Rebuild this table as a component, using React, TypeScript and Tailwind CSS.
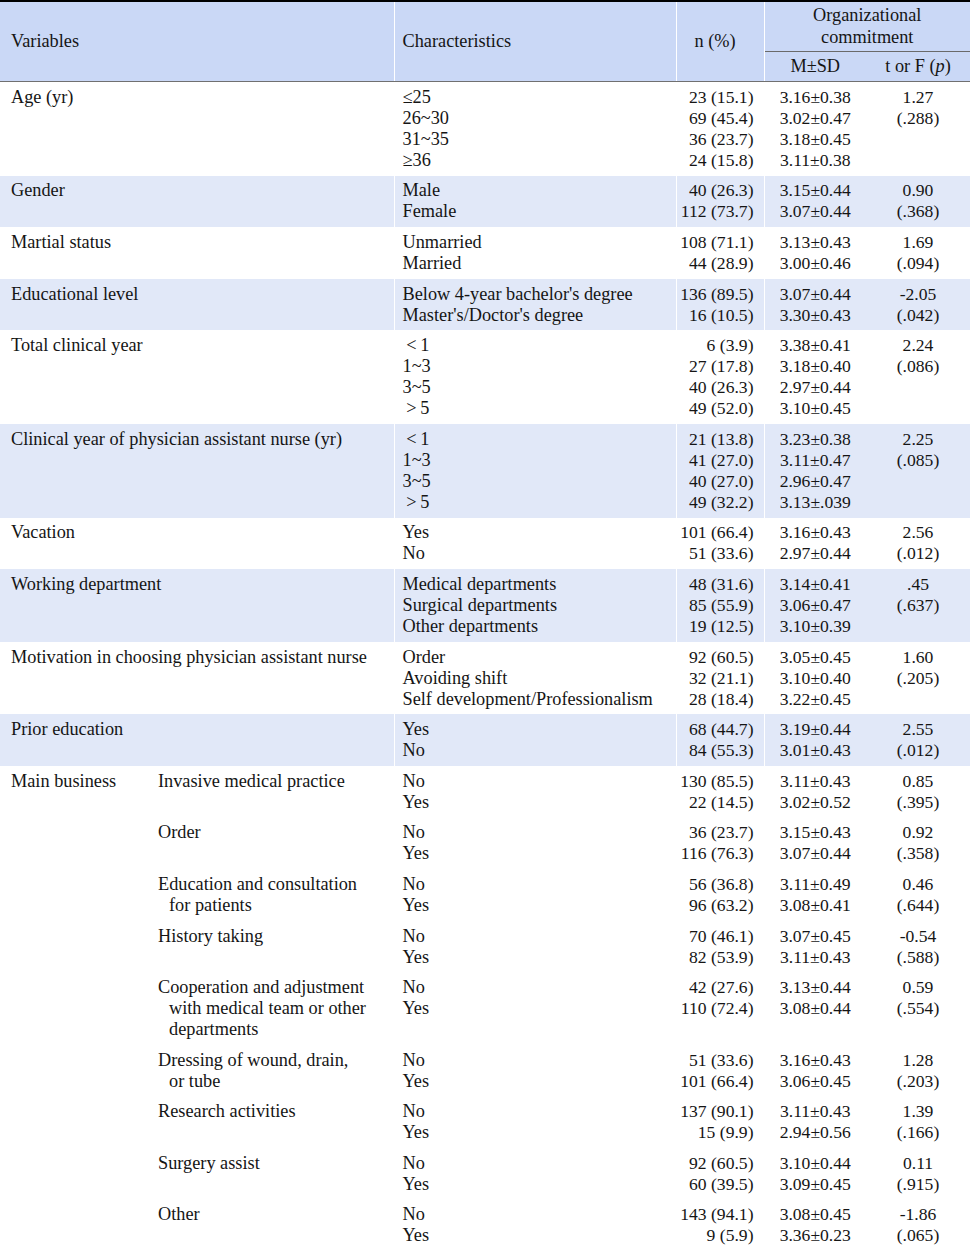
import React from 'react';

type Row = {
  v: string;
  c: string[];
  n: string[];
  m: string[];
  t: string[];
  blue?: boolean;
};

type SubRow = {
  s: string[];
  n: string[];
  m: string[];
  t: string[];
};

const rows: Row[] = [
  { v: 'Age (yr)', c: ['≤25', '26~30', '31~35', '≥36'], n: ['23 (15.1)', '69 (45.4)', '36 (23.7)', '24 (15.8)'], m: ['3.16±0.38', '3.02±0.47', '3.18±0.45', '3.11±0.38'], t: ['1.27', '(.288)'] },
  { v: 'Gender', c: ['Male', 'Female'], n: ['40 (26.3)', '112 (73.7)'], m: ['3.15±0.44', '3.07±0.44'], t: ['0.90', '(.368)'], blue: true },
  { v: 'Martial status', c: ['Unmarried', 'Married'], n: ['108 (71.1)', '44 (28.9)'], m: ['3.13±0.43', '3.00±0.46'], t: ['1.69', '(.094)'] },
  { v: 'Educational level', c: ["Below 4-year bachelor's degree", "Master's/Doctor's degree"], n: ['136 (89.5)', '16 (10.5)'], m: ['3.07±0.44', '3.30±0.43'], t: ['-2.05', '(.042)'], blue: true },
  { v: 'Total clinical year', c: ['\u2009<\u20091', '1~3', '3~5', '\u2009>\u20095'], n: ['6 (3.9)', '27 (17.8)', '40 (26.3)', '49 (52.0)'], m: ['3.38±0.41', '3.18±0.40', '2.97±0.44', '3.10±0.45'], t: ['2.24', '(.086)'] },
  { v: 'Clinical year of physician assistant nurse (yr)', c: ['\u2009<\u20091', '1~3', '3~5', '\u2009>\u20095'], n: ['21 (13.8)', '41 (27.0)', '40 (27.0)', '49 (32.2)'], m: ['3.23±0.38', '3.11±0.47', '2.96±0.47', '3.13±.039'], t: ['2.25', '(.085)'], blue: true },
  { v: 'Vacation', c: ['Yes', 'No'], n: ['101 (66.4)', '51 (33.6)'], m: ['3.16±0.43', '2.97±0.44'], t: ['2.56', '(.012)'] },
  { v: 'Working department', c: ['Medical departments', 'Surgical departments', 'Other departments'], n: ['48 (31.6)', '85 (55.9)', '19 (12.5)'], m: ['3.14±0.41', '3.06±0.47', '3.10±0.39'], t: ['.45', '(.637)'], blue: true },
  { v: 'Motivation in choosing physician assistant nurse', c: ['Order', 'Avoiding shift', 'Self development/Professionalism'], n: ['92 (60.5)', '32 (21.1)', '28 (18.4)'], m: ['3.05±0.45', '3.10±0.40', '3.22±0.45'], t: ['1.60', '(.205)'] },
  { v: 'Prior education', c: ['Yes', 'No'], n: ['68 (44.7)', '84 (55.3)'], m: ['3.19±0.44', '3.01±0.43'], t: ['2.55', '(.012)'], blue: true },
];

const business: SubRow[] = [
  { s: ['Invasive medical practice'], n: ['130 (85.5)', '22 (14.5)'], m: ['3.11±0.43', '3.02±0.52'], t: ['0.85', '(.395)'] },
  { s: ['Order'], n: ['36 (23.7)', '116 (76.3)'], m: ['3.15±0.43', '3.07±0.44'], t: ['0.92', '(.358)'] },
  { s: ['Education and consultation', 'for patients'], n: ['56 (36.8)', '96 (63.2)'], m: ['3.11±0.49', '3.08±0.41'], t: ['0.46', '(.644)'] },
  { s: ['History taking'], n: ['70 (46.1)', '82 (53.9)'], m: ['3.07±0.45', '3.11±0.43'], t: ['-0.54', '(.588)'] },
  { s: ['Cooperation and adjustment', 'with medical team or other', 'departments'], n: ['42 (27.6)', '110 (72.4)'], m: ['3.13±0.44', '3.08±0.44'], t: ['0.59', '(.554)'] },
  { s: ['Dressing of wound, drain,', 'or tube'], n: ['51 (33.6)', '101 (66.4)'], m: ['3.16±0.43', '3.06±0.45'], t: ['1.28', '(.203)'] },
  { s: ['Research activities'], n: ['137 (90.1)', '15 (9.9)'], m: ['3.11±0.43', '2.94±0.56'], t: ['1.39', '(.166)'] },
  { s: ['Surgery assist'], n: ['92 (60.5)', '60 (39.5)'], m: ['3.10±0.44', '3.09±0.45'], t: ['0.11', '(.915)'] },
  { s: ['Other'], n: ['143 (94.1)', '9 (5.9)'], m: ['3.08±0.45', '3.36±0.23'], t: ['-1.86', '(.065)'] },
];

function Lines({ items }: { items: string[] }) {
  return (
    <>
      {items.map((x, i) => (
        <div key={i} className="whitespace-nowrap">
          {x}
        </div>
      ))}
    </>
  );
}

const cell = 'align-top py-[4.8px] leading-[21px]';
const num = 'text-[17.6px]';

function Values({ r }: { r: { n: string[]; m: string[]; t: string[] } }) {
  return (
    <>
      <td className={`${cell} ${num} pr-[10px] text-right border-r border-white`}>
        <Lines items={r.n} />
      </td>
      <td className={`${cell} ${num} text-center`}>
        <Lines items={r.m} />
      </td>
      <td className={`${cell} ${num} text-center`}>
        <Lines items={r.t} />
      </td>
    </>
  );
}

export default function App() {
  return (
    <div className="w-[970px] bg-white text-[#151515] font-['Liberation_Serif',serif] text-[18.3px]">
      <table className="w-full table-fixed border-t-2 border-b-2 border-t-black border-b-[#222]">
        <colgroup>
          <col className="w-[148px]" />
          <col className="w-[246px]" />
          <col className="w-[282px]" />
          <col className="w-[88px]" />
          <col className="w-[102px]" />
          <col className="w-[104px]" />
        </colgroup>
        <thead className="bg-[#cad8f6]">
          <tr>
            <th rowSpan={2} colSpan={2} className="font-normal text-left pl-[11px] align-middle border-r border-white border-b-[1.5px] border-b-[#707070]">
              Variables
            </th>
            <th rowSpan={2} className="font-normal text-left pl-[8px] align-middle border-r border-white border-b-[1.5px] border-b-[#707070]">
              Characteristics
            </th>
            <th rowSpan={2} className="font-normal text-center pr-[10px] align-middle border-r border-white border-b-[1.5px] border-b-[#707070]">
              n (%)
            </th>
            <th colSpan={2} className="font-normal text-center leading-[22px] pt-[2px] pb-[3px] border-b border-b-[#6a6a6a]">
              <div>Organizational</div>
              <div>commitment</div>
            </th>
          </tr>
          <tr>
            <th className="font-normal text-center leading-[21px] py-[4px] border-b-[1.5px] border-b-[#707070]">M±SD</th>
            <th className="font-normal text-center leading-[21px] py-[4px] border-b-[1.5px] border-b-[#707070]">
              t or F (<i>p</i>)
            </th>
          </tr>
        </thead>
        <tbody>
          {rows.map((r, i) => (
            <tr key={i} className={r.blue ? 'bg-[#e1e8f8]' : 'bg-white'}>
              <td colSpan={2} className={`${cell} pl-[11px] border-r border-white`}>
                <div className="whitespace-nowrap">{r.v}</div>
              </td>
              <td className={`${cell} pl-[8px] border-r border-white`}>
                <Lines items={r.c} />
              </td>
              <Values r={r} />
            </tr>
          ))}
          {business.map((r, i) => (
            <tr key={`b${i}`} className="bg-white">
              {i === 0 && (
                <td rowSpan={business.length} className={`${cell} pl-[11px]`}>
                  <div className="whitespace-nowrap">Main business</div>
                </td>
              )}
              <td className={`${cell} pl-[10px] border-r border-white`}>
                {r.s.map((x, j) => (
                  <div key={j} className={j > 0 ? 'whitespace-nowrap pl-[11px]' : 'whitespace-nowrap'}>
                    {x}
                  </div>
                ))}
              </td>
              <td className={`${cell} pl-[8px] border-r border-white`}>
                <Lines items={['No', 'Yes']} />
              </td>
              <Values r={r} />
            </tr>
          ))}
        </tbody>
      </table>
    </div>
  );
}
